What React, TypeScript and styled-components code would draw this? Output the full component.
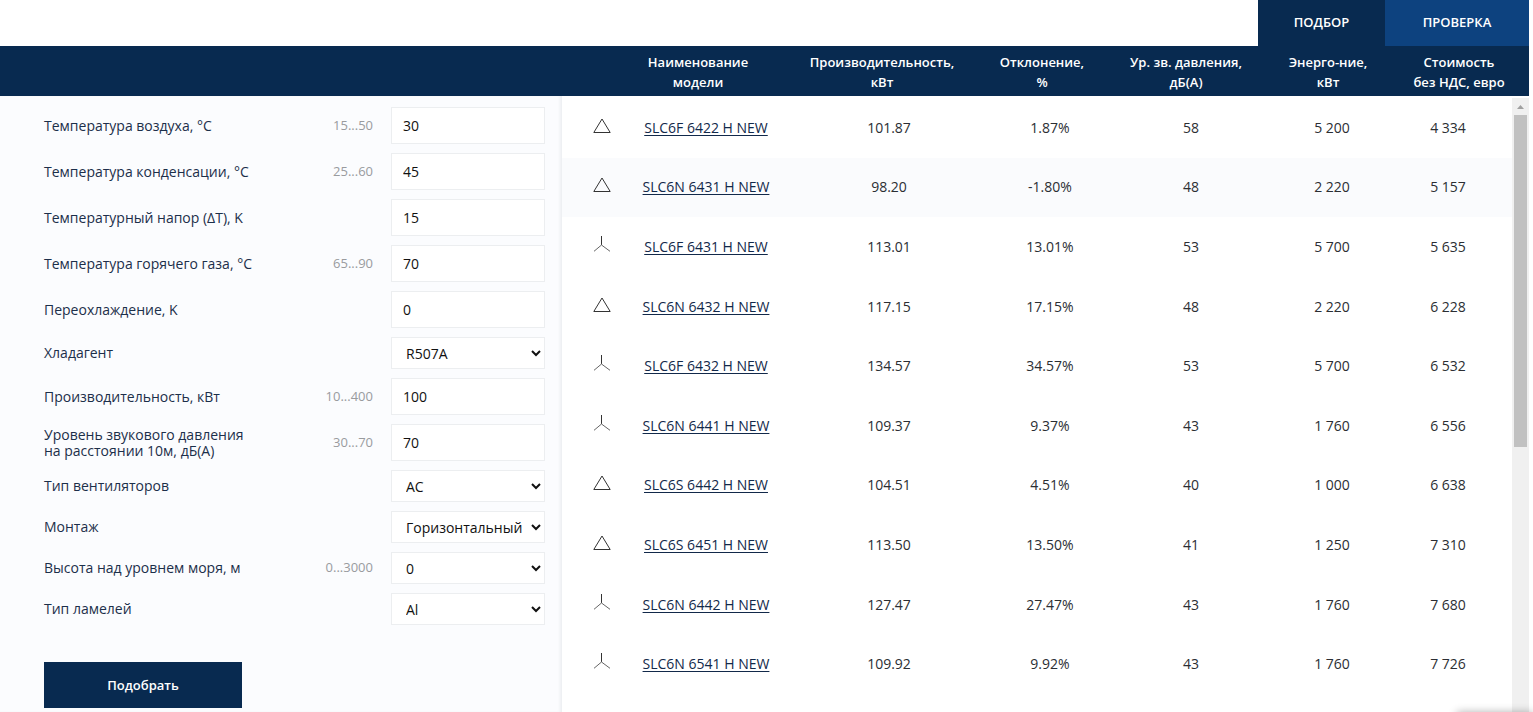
import React, { useId } from "react";
import styled, { createGlobalStyle } from "styled-components";

const navy = "#082a50";
const blue = "#0d427f";

const GlobalStyle = createGlobalStyle`
  *, *::before, *::after { box-sizing: border-box; }
  body {
    margin: 0;
    background: #fff;
    color: #2b2e33;
    font-family: "Open Sans", "Noto Sans", sans-serif;
    font-size: 14px;
  }
  button, input, select { font: inherit; }
`;

const Page = styled.div`
  display: flex;
  flex-direction: column;
  min-height: 100vh;
  padding-right: 4px;
`;

const Tabs = styled.nav`
  display: flex;
  justify-content: flex-end;
  height: 46px;
`;

const Tab = styled.button<{ $active?: boolean }>`
  border: 0;
  padding: 0 32px 2px;
  min-width: ${(p) => (p.$active ? 127 : 144)}px;
  white-space: nowrap;
  color: #fff;
  font-size: 13px;
  font-weight: 600;
  background: ${(p) => (p.$active ? navy : blue)};
  cursor: pointer;
`;

const HeaderBar = styled.header`
  display: grid;
  grid-template-columns: 562fr 967fr;
  background: ${navy};
`;

const Table = styled.table`
  width: 100%;
  table-layout: fixed;
  border-collapse: collapse;
`;

const HeadTable = styled(Table)`
  grid-column: 2;
`;

const HeadCell = styled.th`
  padding: 6px 0 4px;
  color: #fff;
  font-size: 13px;
  font-weight: 600;
  line-height: 20px;
  white-space: nowrap;
`;

const Content = styled.main`
  display: grid;
  grid-template-columns: 562fr 967fr;
  flex: 1;
`;

const Panel = styled.form`
  padding: 11px 17px 4px 44px;
  background: #fbfcfe;
  box-shadow: inset -3px 0 3px -1px #eceef1;
`;

const Fields = styled.div`
  display: grid;
  gap: 9px;
`;

const Field = styled.div`
  display: grid;
  grid-template-columns: 1fr auto 154px;
  align-items: center;
`;

const Label = styled.label`
  color: #1c2f4a;
  line-height: 16px;
  white-space: pre-line;
`;

const Hint = styled.span`
  margin-right: 18px;
  padding-bottom: 2px;
  color: #999b9e;
  font-size: 13px;
  line-height: 16px;
`;

const Input = styled.input`
  width: 100%;
  height: 37px;
  padding: 0 11px;
  border: 1px solid #eceef0;
  background: #fff;
  color: #111;
`;

const Select = styled.select`
  width: 100%;
  height: 32px;
  padding: 0 0 0 10px;
  border: 1px solid #eceef0;
  border-radius: 0;
  background: #fff;
  color: #111;
`;

const Submit = styled.button`
  width: 198px;
  height: 46px;
  margin-top: 37px;
  border: 0;
  background: ${navy};
  color: #fff;
  font-size: 13px;
  font-weight: 600;
  cursor: pointer;
`;

const Results = styled.section`
  display: grid;
  grid-template-columns: 1fr 17px;
  align-items: start;
  padding-top: 2px;
`;

const ResultTable = styled(Table)`
  height: 596px;
`;

const Row = styled.tr<{ $tinted: boolean }>`
  background: ${(p) => (p.$tinted ? "#fafbfd" : "transparent")};
`;

const Cell = styled.td`
  padding: 0;
  line-height: 20px;
  text-align: center;
  white-space: nowrap;
`;

const IconCell = styled(Cell)`
  padding: 0 0 6px 10px;

  svg {
    display: block;
    margin: 0 auto;
  }
`;

const ModelLink = styled.a`
  color: #12294a;
  text-decoration: underline;
  text-underline-offset: 2px;
`;

const Track = styled.div`
  display: flex;
  flex-direction: column;
  align-self: stretch;
  padding: 0 2px;
  background: #f0f0f0;
`;

const TrackArrow = styled.svg`
  width: 13px;
  height: 17px;
`;

const Thumb = styled.div`
  height: 54%;
  background: #c1c1c1;
`;

const CornerShadow = styled.div`
  position: fixed;
  right: 0;
  bottom: -20px;
  width: 76px;
  height: 20px;
  box-shadow: 0 0 8px rgba(0, 0, 0, 0.3);
`;

type FieldSpec = { label: string; hint?: string; value: string; select?: boolean };

const fields: FieldSpec[] = [
  { label: "Температура воздуха, °C", hint: "15...50", value: "30" },
  { label: "Температура конденсации, °C", hint: "25...60", value: "45" },
  { label: "Температурный напор (ΔT), K", value: "15" },
  { label: "Температура горячего газа, °C", hint: "65...90", value: "70" },
  { label: "Переохлаждение, K", value: "0" },
  { label: "Хладагент", value: "R507A", select: true },
  { label: "Производительность, кВт", hint: "10...400", value: "100" },
  { label: "Уровень звукового давления\nна расстоянии 10м, дБ(А)", hint: "30...70", value: "70" },
  { label: "Тип вентиляторов", value: "AC", select: true },
  { label: "Монтаж", value: "Горизонтальный", select: true },
  { label: "Высота над уровнем моря, м", hint: "0...3000", value: "0", select: true },
  { label: "Тип ламелей", value: "Al", select: true },
];

const columns = [
  ["Наименование", "модели"],
  ["Производительность,", "кВт"],
  ["Отклонение,", "%"],
  ["Ур. зв. давления,", "дБ(А)"],
  ["Энерго-ние,", "кВт"],
  ["Стоимость", "без НДС, евро"],
];

const headWidths = [44, 184, 184, 136, 152, 132, 130, 5];
const bodyWidths = [70, 148, 218, 104, 178, 104, 128];

type Connection = "delta" | "star";

const rows: [Connection, ...string[]][] = [
  ["delta", "SLC6F 6422 H NEW", "101.87", "1.87%", "58", "5 200", "4 334"],
  ["delta", "SLC6N 6431 H NEW", "98.20", "-1.80%", "48", "2 220", "5 157"],
  ["star", "SLC6F 6431 H NEW", "113.01", "13.01%", "53", "5 700", "5 635"],
  ["delta", "SLC6N 6432 H NEW", "117.15", "17.15%", "48", "2 220", "6 228"],
  ["star", "SLC6F 6432 H NEW", "134.57", "34.57%", "53", "5 700", "6 532"],
  ["star", "SLC6N 6441 H NEW", "109.37", "9.37%", "43", "1 760", "6 556"],
  ["delta", "SLC6S 6442 H NEW", "104.51", "4.51%", "40", "1 000", "6 638"],
  ["delta", "SLC6S 6451 H NEW", "113.50", "13.50%", "41", "1 250", "7 310"],
  ["star", "SLC6N 6442 H NEW", "127.47", "27.47%", "43", "1 760", "7 680"],
  ["star", "SLC6N 6541 H NEW", "109.92", "9.92%", "43", "1 760", "7 726"],
];

function Columns({ widths }: { widths: number[] }) {
  return (
    <colgroup>
      {widths.map((w, i) => (
        <col key={i} width={w} />
      ))}
    </colgroup>
  );
}

function ConnectionIcon({ kind }: { kind: Connection }) {
  return (
    <svg width="18" height="16" viewBox="0 0 18 16" fill="none" stroke="#333">
      {kind === "delta" ? (
        <path d="M9 2 L17.2 15.5 H0.8 Z" />
      ) : (
        <>
          <path d="M8.5 0 V9" />
          <path d="M1 15.3 L8.5 9 L17 15.3" stroke="#666" />
        </>
      )}
    </svg>
  );
}

function FormField({ label, hint, value, select }: FieldSpec) {
  const id = useId();
  return (
    <Field>
      <Label htmlFor={id}>{label}</Label>
      {hint ? <Hint>{hint}</Hint> : <span />}
      {select ? (
        <Select id={id} defaultValue={value}>
          <option>{value}</option>
        </Select>
      ) : (
        <Input id={id} defaultValue={value} />
      )}
    </Field>
  );
}

export default function App() {
  return (
    <>
      <GlobalStyle />
      <Page>
        <Tabs>
          <Tab type="button" $active>ПОДБОР</Tab>
          <Tab type="button">ПРОВЕРКА</Tab>
        </Tabs>
        <HeaderBar>
          <HeadTable>
            <Columns widths={headWidths} />
            <thead>
              <tr>
                <td />
                {columns.map(([first, second]) => (
                  <HeadCell key={first} scope="col">
                    {first}
                    <br />
                    {second}
                  </HeadCell>
                ))}
                <td />
              </tr>
            </thead>
          </HeadTable>
        </HeaderBar>
        <Content>
          <Panel onSubmit={(e) => e.preventDefault()}>
            <Fields>
              {fields.map((f) => (
                <FormField key={f.label} {...f} />
              ))}
            </Fields>
            <Submit>Подобрать</Submit>
          </Panel>
          <Results>
            <ResultTable>
              <Columns widths={bodyWidths} />
              <tbody>
                {rows.map(([kind, model, ...values], i) => (
                  <Row key={model} $tinted={i === 1}>
                    <IconCell>
                      <ConnectionIcon kind={kind} />
                    </IconCell>
                    <Cell>
                      <ModelLink href="#">{model}</ModelLink>
                    </Cell>
                    {values.map((v, j) => (
                      <Cell key={j}>{v}</Cell>
                    ))}
                  </Row>
                ))}
              </tbody>
            </ResultTable>
            <Track aria-hidden="true">
              <TrackArrow viewBox="0 0 13 17">
                <path d="M3 11 L6.5 7 L10 11 Z" fill="#a0a0a0" />
              </TrackArrow>
              <Thumb />
            </Track>
          </Results>
        </Content>
      </Page>
      <CornerShadow />
    </>
  );
}
